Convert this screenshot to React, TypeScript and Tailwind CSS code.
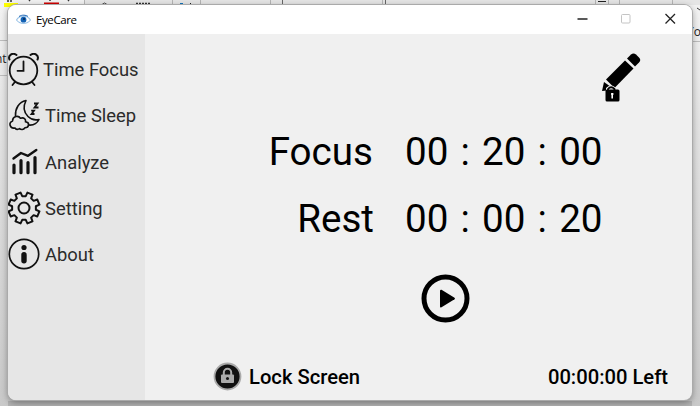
import React from "react";

const gearPath = (() => {
  const n = 8;
  const pts: string[] = [];
  const p = (r: number, deg: number) => {
    const a = ((deg - 90) * Math.PI) / 180;
    pts.push(`${(17 + r * Math.cos(a)).toFixed(2)} ${(17 + r * Math.sin(a)).toFixed(2)}`);
  };
  for (let i = 0; i < n; i++) {
    const c = 22.5 + i * 45;
    p(12, c - 14);
    p(15.8, c - 10);
    p(15.8, c + 10);
    p(12, c + 14);
  }
  return `M${pts.join("L")}Z`;
})();

const Clock = () => (
  <svg width="32" height="34" viewBox="0 0 32 34" fill="none" stroke="#111" strokeWidth="1.8" strokeLinecap="round">
    <circle cx="15.500" cy="17.500" r="13.800" />
    <path d="M15.500 8.500v9.300H9.500M6.500 29.500 4.500 32M24.500 29.500 26.500 32" />
    <path d="M1.500 6.500C-.3 2.500 4.500-1 8.500 2M22.500 2c4-3 8.800.5 7 4.500" strokeWidth="2" />
  </svg>
);

const Moon = () => (
  <svg width="32" height="33" viewBox="0 0 32 33" fill="none" stroke="#111" strokeWidth="1.6" strokeLinejoin="round" strokeLinecap="round" className="relative -top-px left-px">
    <path d="M6.500 17C6 9.500 10 3 17 1.500c-3 6-2 12 2 16 3 3 7 4 11 3-2 4-6 6-10.500 5.500" />
    <path d="M6 29c-5 1-7-5.500-2.500-7 .2-5 6-6 8-2.700 3.500-1.300 5.500 1 5 3.500 4.500.5 3.800 6-.5 6-1.500 2.200-4 2.200-5.500.7-1.500 1.300-3.500 1.200-4.500-.5Z" />
    <path strokeWidth="1.800" strokeLinecap="butt" strokeLinejoin="miter" d="M25 4.500h3.500L25.500 8.500h4M22.200 11.700h2.800l-2.500 3.300h3" />
  </svg>
);

const Chart = () => (
  <svg width="27" height="27" viewBox="0 0 27 27" fill="none" stroke="#111" strokeWidth="3.200" strokeLinecap="round" strokeLinejoin="round" className="relative -top-px">
    <path d="M3 17v7.700M10 12.500v12.200M17 14.500v10.200M24 9.500v15.200" />
    <path strokeWidth="2.400" d="m2.500 10.500 7.500-5.500 7 2.800L25.300 2" />
  </svg>
);

const Gear = () => (
  <svg width="34" height="34" viewBox="0 0 34 34" fill="none" stroke="#111" strokeWidth="2" strokeLinejoin="round" className="relative -top-px shrink-0">
    <path d={gearPath} />
    <circle cx="17" cy="17" r="5.500" />
  </svg>
);

const Info = () => (
  <svg width="32" height="32" viewBox="0 0 32 32" fill="#111" className="relative -top-px">
    <circle cx="16" cy="16" r="14.700" fill="none" stroke="#111" strokeWidth="1.700" />
    <circle cx="16" cy="9.500" r="2.600" />
    <rect x="13.300" y="14" width="5.400" height="11.500" rx="2.700" />
  </svg>
);

const items = [
  { label: "Time Focus", icon: <Clock />, text: "pl-[35px]" },
  { label: "Time Sleep", icon: <Moon />, text: "pl-[37px]" },
  { label: "Analyze", icon: <Chart />, text: "pl-[37px]" },
  { label: "Setting", icon: <Gear />, text: "pl-[37px]" },
  { label: "About", icon: <Info />, text: "pl-[37px]" },
];

const Desktop = () => (
  <svg className="absolute inset-0" width="700" height="406">
    <defs>
      <linearGradient id="edge" x1="0" x2="0" y1="0" y2="1">
        <stop offset="0" stopColor="#f3f3f3" />
        <stop offset="0.300" stopColor="#e3e3e3" />
        <stop offset="1" stopColor="#c9c9c9" />
      </linearGradient>
    </defs>
    <rect width="700" height="406" fill="url(#edge)" />
    <rect width="700" height="5" fill="#e5e5e5" />
    <rect width="84" height="5" fill="#f1f1f1" />
    <rect x="4" y="3" width="14" height="4" fill="#ffff00" />
    <rect x="44" y="2.500" width="15" height="2.500" fill="#d00000" />
    <path d="M7 1h5M29 0l1 1M50 0v1M69 0l-1 1M136 3.500h15" stroke="#333" strokeWidth="1.500" strokeDasharray="2 1" />
    <path d="m102 4.500 2.500-1.500 2.500 1.500" stroke="#444" fill="none" />
    <path d="M84.500 0v5M172.500 0v5M200.500 0v5M270.500 0v5M382.500 0v5M595.500 0v5M608.500 0v5M619.500 0v5M672.500 0v5" stroke="#b5b5b5" />
    <path d="M282.500 0v5M385.500 0v5" stroke="#666" />
    <path d="M598 1.500h8M600 4.500h4" stroke="#222" />
    <rect x="180" y="3" width="3" height="2" fill="#1475bd" />
    <rect x="190" y="3" width="1" height="2" fill="#222" />
    <path d="M0 40.500h8M0 75.500h8M692 41.500h8" stroke="#bdbdbd" />
    <path d="m697 8 3 2" stroke="#333" />
    <text x="-5" y="63" fontSize="12" fontFamily="Open Sans" fill="#222">nt</text>
    <text x="687" y="36" fontSize="12" fontFamily="Open Sans" fill="#222">Yo</text>
    <rect x="8" y="401" width="684" height="5" fill="#b2b2b2" />
  </svg>
);

const Time = ({ parts }: { parts: string[] }) => (
  <div className="flex h-[46px] w-[197.5px] items-center justify-between">
    <span>{parts[0]}</span>
    <span className="-mt-px">:</span>
    <span>{parts[1]}</span>
    <span className="-mt-px">:</span>
    <span>{parts[2]}</span>
  </div>
);

export default function App() {
  return (
    <div className="relative h-[406px] w-[700px] overflow-hidden px-2 pt-[5px] font-[Roboto,sans-serif]">
      <Desktop />
      <div className="relative flex h-[395px] w-[684px] flex-col overflow-hidden rounded-lg bg-[#f0f0f0] shadow-[0_0_0_1px_#aaa,0_2px_7px_rgba(0,0,0,.4)]">
        <header className="flex h-[29px] shrink-0 items-center bg-white pr-[14px] pl-2">
          <svg width="15" height="11" viewBox="0 0 15 11" fill="none">
            <path d="M.5 6C3 1.500 11 .500 14.500 6 11 10.500 4 10.500.5 6Z" stroke="#9cc4e8" strokeWidth="1.200" />
            <path d="M3 2.500C6 .500 10 1 12 2.500" stroke="#1d65b4" />
            <circle cx="7.500" cy="5.700" r="2.900" fill="#1262b5" />
            <circle cx="8" cy="5" r="1.100" fill="#092b58" />
          </svg>
          <span className="ml-[5px] flex-1 font-['Open_Sans',sans-serif] text-[11.5px] tracking-[-0.4px] text-black">EyeCare</span>
          <svg width="108" height="29" viewBox="0 0 108 29" fill="none">
            <path d="M7.500 14h10" stroke="#222" strokeWidth="1.400" />
            <rect x="51.500" y="9.500" width="8.500" height="8.500" rx="1" stroke="#c4c4c4" />
            <path d="m95.500 9 9.500 9.500m0-9.500-9.500 9.500" stroke="#222" strokeWidth="1.300" />
          </svg>
        </header>
        <div className="flex flex-1">
          <nav className="w-[137px] bg-[#e6e6e6] pt-[13px] text-[18.4px] text-[#2b2b2b]">
            {items.map(({ label, icon, text }) => (
              <div key={label} className="grid h-[46.2px] grid-cols-1 items-center">
                <span className="col-start-1 row-start-1 flex w-[32px] justify-center">{icon}</span>
                <span className={`col-start-1 row-start-1 whitespace-nowrap ${text}`}>{label}</span>
              </div>
            ))}
          </nav>
          <main className="flex flex-1 flex-col text-black">
            <div className="flex h-[95px] justify-end pt-[17px] pr-[51px]">
              <svg width="42" height="52" viewBox="0 0 42 52">
                <path d="M7 28.500 26 9.500l8.500 8L15.500 37Z" />
                <path d="m28 7.500 4-4q2.500-2 5 0l3 3q2.500 2.500 0 5l-4 4Z" />
                <path d="M5 31 3 40l5-.5 3-2 1-1.500Z" />
                <path d="M9 40.500v-2.500q3-3 6 0v2.500" fill="none" stroke="#f0f0f0" strokeWidth="4" />
                <path d="M9 41v-3q3-3.500 6.500 0v3" fill="none" stroke="#000" strokeWidth="1.800" />
                <rect x="6.500" y="38.500" width="14" height="12" rx="1.500" />
                <path d="M13.200 42v5.500M12 43h2.500" stroke="#fff" strokeWidth="1.600" />
              </svg>
            </div>
            <div className="flex flex-col gap-[21px] text-[38.6px] leading-[46px]">
              <div className="flex gap-[32px]">
                <span className="w-[228px] text-right">Focus</span>
                <Time parts={["00", "20", "00"]} />
              </div>
              <div className="flex gap-[31px]">
                <span className="w-[229px] text-right">Rest</span>
                <Time parts={["00", "00", "20"]} />
              </div>
            </div>
            <div className="mt-[32px] pl-[276px]">
              <svg width="49" height="49" viewBox="0 0 49 49">
                <circle cx="24.500" cy="24.500" r="21.500" fill="none" stroke="#000" strokeWidth="5" />
                <path d="M19 17v15.500q0 1.500 1.500.7l13-8q1-.7 0-1.400l-13-8Q19 15.500 19 17Z" />
              </svg>
            </div>
            <div className="mt-[38px] flex items-center pr-[24px] pl-[68px] text-[20.2px] leading-7 font-medium">
              <svg width="29" height="29" viewBox="0 0 29 29">
                <circle cx="14.500" cy="14.500" r="13" fill="#111" stroke="#aaa" strokeWidth="1.800" />
                <path d="M10.800 13v-2.500a3.700 3.700 0 0 1 7.400 0V13" fill="none" stroke="#aaa" strokeWidth="2" />
                <rect x="8" y="12.500" width="13" height="8.500" rx="1" fill="#aaa" />
                <circle cx="14.500" cy="16.500" r="1.500" fill="#111" />
              </svg>
              <span className="ml-[7px] flex-1 pt-[2px]">Lock Screen</span>
              <span className="pt-[2px]">00:00:00 Left</span>
            </div>
          </main>
        </div>
      </div>
    </div>
  );
}
